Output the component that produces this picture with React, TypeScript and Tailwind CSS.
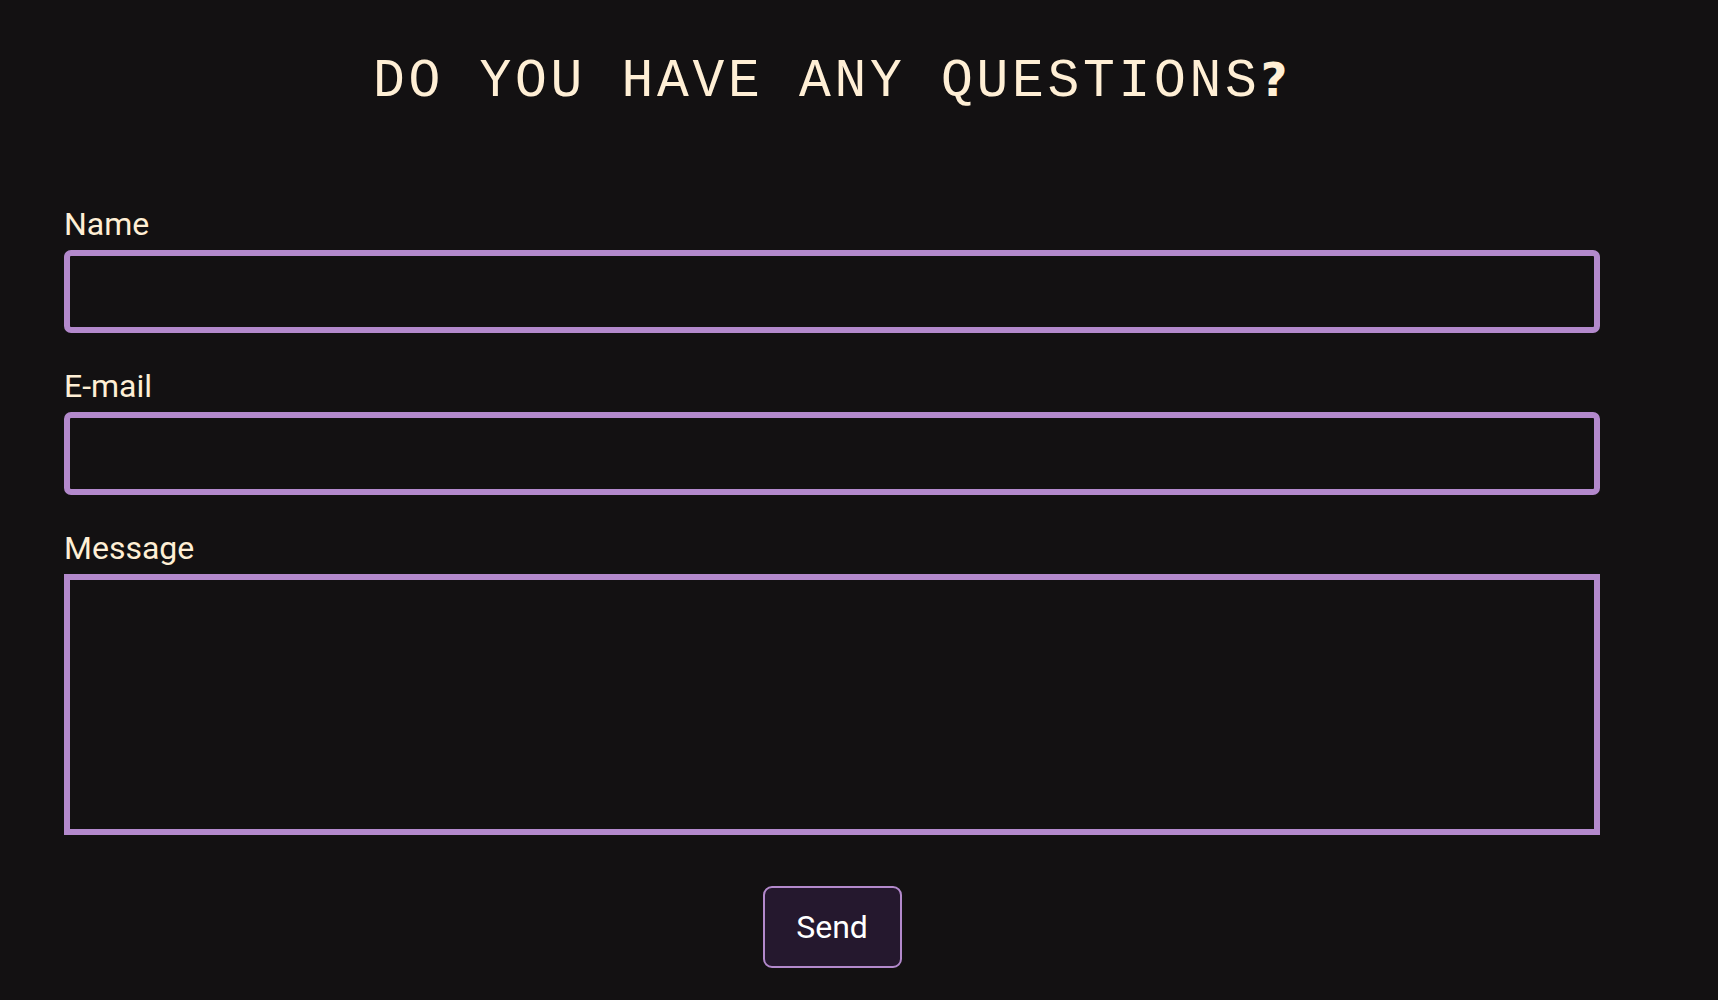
export default function App() {
  return (
    <div className="min-h-screen w-full bg-[#131112] font-['Roboto',sans-serif]">
      <div className="w-[1536px] ml-[64px] pt-[50px]">
        {/* Title */}
        <h1 className="text-center text-[#ffefd5] font-['Liberation_Mono',monospace] text-[53px] leading-[60px] tracking-[3.7px] font-normal">
          DO YOU HAVE ANY QUESTIONS
          <span className="font-['DejaVu_Sans',sans-serif] font-bold text-[46px]">?</span>
        </h1>

        {/* Form */}
        <form className="mt-[95px] flex flex-col" onSubmit={(e) => e.preventDefault()}>
          <label className="text-[#ffefd5] text-[32px] leading-[35px]">Name</label>
          <input
            type="text"
            className="mt-[8px] h-[83px] w-full rounded-[7px] border-[6px] border-[#b389cc] bg-[#131112] outline-none"
          />

          <label className="mt-[36px] text-[#ffefd5] text-[32px] leading-[35px]">E-mail</label>
          <input
            type="email"
            className="mt-[8px] h-[83px] w-full rounded-[7px] border-[6px] border-[#b389cc] bg-[#131112] outline-none"
          />

          <label className="mt-[36px] text-[#ffefd5] text-[32px] leading-[35px]">Message</label>
          <textarea className="mt-[8px] h-[261px] w-full resize-none border-[6px] border-[#b389cc] bg-[#131112] outline-none" />

          <div className="mt-[51px] flex justify-center">
            <button
              type="submit"
              className="h-[82px] w-[139px] rounded-[9px] border-2 border-[#b389cc] bg-[#25182e] text-white text-[32px]"
            >
              Send
            </button>
          </div>
        </form>
      </div>
    </div>
  );
}
